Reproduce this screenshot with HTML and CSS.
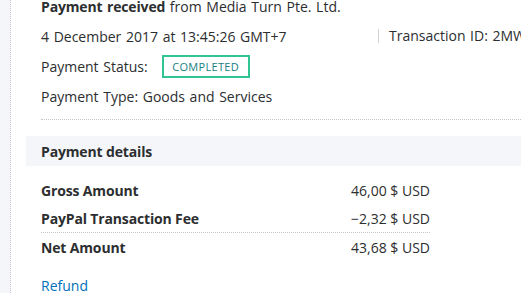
FILE: index.html
```html
<!DOCTYPE html>
<html>
<head>
<meta charset="utf-8">
<link rel="stylesheet" href="styles.css">
</head>
<body>
<div class="page">
  <div class="gutter"></div>
  <div class="main">
    <div class="summary">
      <div class="row"><span class="strong">Payment received</span>&nbsp;from Media Turn Pte. Ltd.</div>
      <div class="row">
        <span class="date">4 December 2017 at 13:45:26 GMT+7</span>
        <span class="txn">Transaction ID: 2MW84913XR5537210</span>
      </div>
      <div class="row">Payment Status: <span class="badge">COMPLETED</span></div>
      <div class="row">Payment Type: Goods and Services</div>
    </div>
    <div class="band">Payment details</div>
    <div class="amounts">
      <div class="arow"><span class="label">Gross Amount</span><span>46,00 $ USD</span></div>
      <div class="arow sep"><span class="label">PayPal Transaction Fee</span><span>−2,32 $ USD</span></div>
      <div class="arow"><span class="label">Net Amount</span><span>43,68 $ USD</span></div>
    </div>
    <div class="links"><a class="link" href="#">Refund</a></div>
  </div>
</div>
</body>
</html>
```
FILE: styles.css
```css
html, body {
  margin: 0;
  padding: 0;
  background: #fff;
  overflow: hidden;
}
body {
  font-family: "Open Sans", "DejaVu Sans", sans-serif;
  font-size: 14px;
  color: #2c2e2f;
}
.page {
  display: flex;
  width: 521px;
  height: 293px;
  overflow: hidden;
}
.gutter {
  flex: 0 0 10px;
  background: #f5f6fa;
  border-right: 1px dotted #c4c6ca;
}
.main {
  flex: 1;
  padding-left: 15px;
  min-width: 0;
  white-space: nowrap;
}
.summary {
  margin: -9px 0 0 15px;
  padding-bottom: 8px;
  border-bottom: 1px dotted #c4c6ca;
  word-spacing: 1px;
}
.row {
  display: flex;
  align-items: center;
  height: 30px;
}
.strong {
  font-weight: 700;
  letter-spacing: -0.15px;
}
.date {
  flex: 0 0 337px;
}
.txn {
  border-left: 1px solid #d0d3d6;
  padding-left: 10px;
  line-height: 14px;
}
.badge {
  display: inline-flex;
  align-items: center;
  justify-content: center;
  width: 84px;
  height: 19px;
  margin-left: 14px;
  border: 2px solid #2fc595;
  color: #157f7f;
  font-size: 11px;
  letter-spacing: 0.3px;
  word-spacing: 0;
}
.band {
  margin-top: 16px;
  height: 30px;
  display: flex;
  align-items: center;
  padding-left: 15px;
  background: #f5f6fa;
  font-weight: 700;
  letter-spacing: -0.15px;
}
.amounts {
  width: 389px;
  margin: 10px 0 0 15px;
}
.arow {
  display: flex;
  justify-content: space-between;
  align-items: center;
  height: 28px;
}
.arow.sep {
  border-bottom: 1px dotted #c4c6ca;
}
.label {
  font-weight: 700;
  letter-spacing: -0.15px;
}
.links {
  margin: 15px 0 0 15px;
}
.link {
  color: #0070ba;
  text-decoration: none;
}
```
